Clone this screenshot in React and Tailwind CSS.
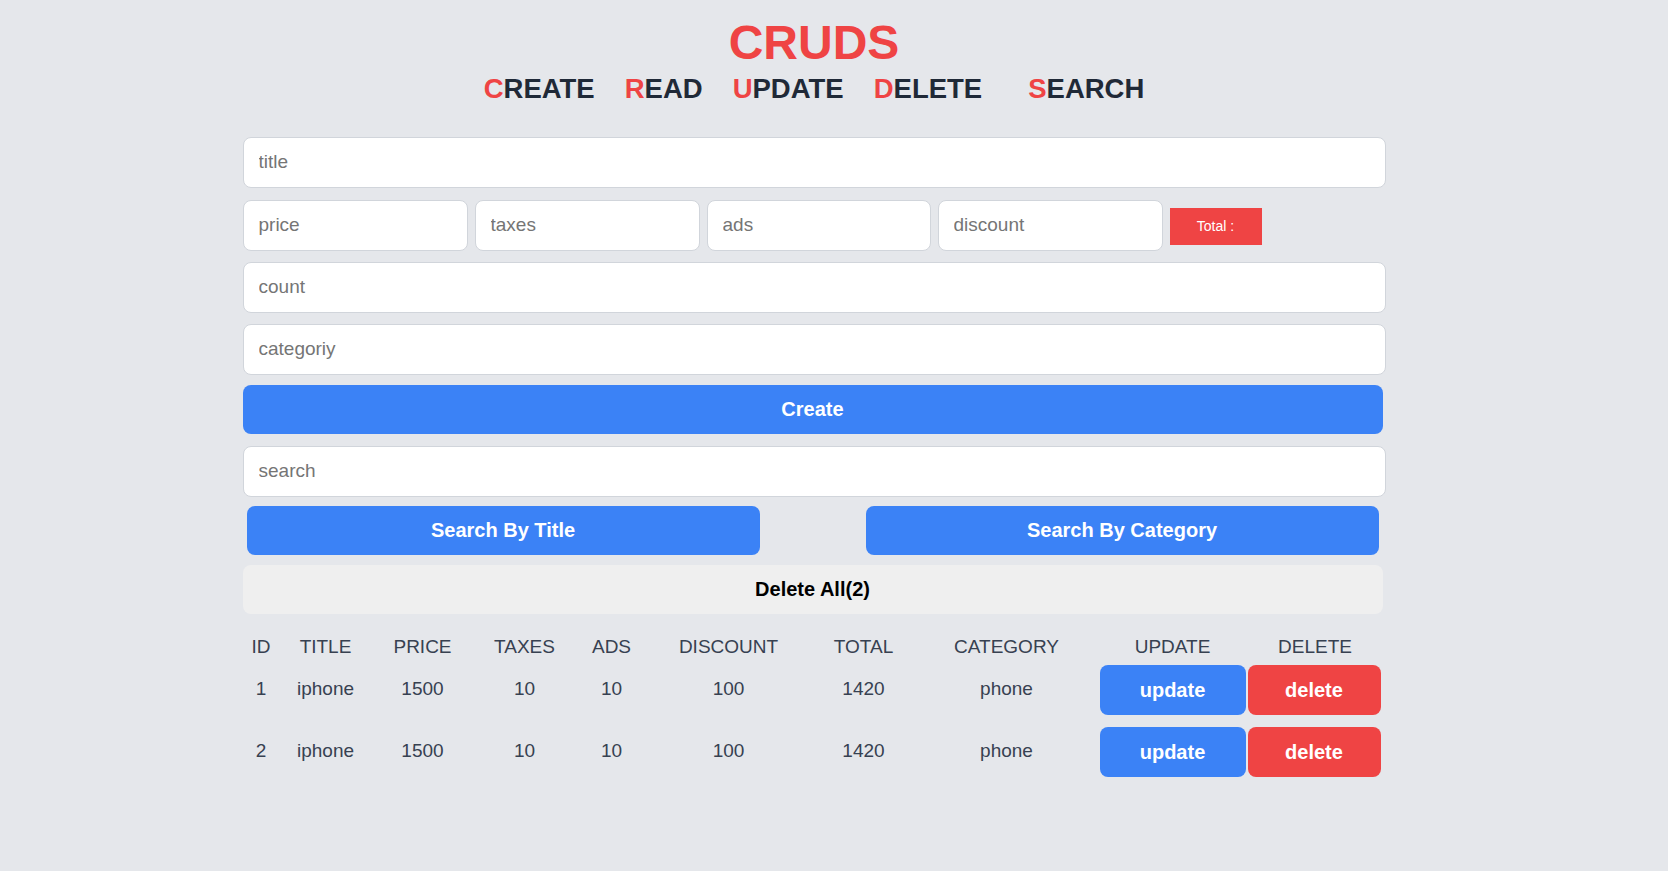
export default function App() {
  const rows = [
    { id: 1, title: "iphone", price: 1500, taxes: 10, ads: 10, discount: 100, total: 1420, category: "phone" },
    { id: 2, title: "iphone", price: 1500, taxes: 10, ads: 10, discount: 100, total: 1420, category: "phone" },
  ];
  const inputCls =
    "h-[51px] rounded-lg border border-[#d1d5db] bg-white px-[15px] text-[19px] text-[#1f2937] outline-none placeholder:text-[#757575]";
  const grid =
    "grid grid-cols-[37px_92px_102px_102px_72px_162px_108px_178px_152px_135px] text-center text-[19px] text-[#374151]";

  return (
    <div className="min-h-screen bg-[#e5e7eb] pr-[40px] pt-[19px] font-['Liberation_Sans',Arial,sans-serif]">
      <div className="mx-auto w-[1143px]">
        <h1 className="text-center text-[48px] font-bold leading-none text-[#ef4444]">CRUDS</h1>
        <div className="mt-[8px] flex justify-center gap-[30px] text-[27.5px] font-bold leading-none text-[#1f2937]">
          <span><span className="text-[#ef4444]">C</span>REATE</span>
          <span><span className="text-[#ef4444]">R</span>EAD</span>
          <span><span className="text-[#ef4444]">U</span>PDATE</span>
          <span><span className="text-[#ef4444]">D</span>ELETE</span>
          <span className="ml-[16px]"><span className="text-[#ef4444]">S</span>EARCH</span>
        </div>

        <div className="mt-[34px] flex flex-col">
          <input className={`${inputCls} w-full`} placeholder="title" />
          <div className="mt-[12px] flex items-center gap-[7px]">
            <input className={`${inputCls} w-[225px]`} placeholder="price" />
            <input className={`${inputCls} w-[225px]`} placeholder="taxes" />
            <input className={`${inputCls} w-[224px]`} placeholder="ads" />
            <input className={`${inputCls} w-[225px]`} placeholder="discount" />
            <div className="mt-[2px] flex h-[37px] w-[92px] items-center justify-center bg-[#ef4444] text-[14px] text-white">
              Total :
            </div>
          </div>
          <input className={`${inputCls} mt-[11px] w-full`} placeholder="count" />
          <input className={`${inputCls} mt-[11px] w-full`} placeholder="categoriy" />
          <button className="mt-[10px] h-[49px] w-[1140px] rounded-lg bg-[#3b82f6] text-[20px] font-bold text-white">
            Create
          </button>
          <input className={`${inputCls} mt-[12px] w-full`} placeholder="search" />
          <div className="mt-[9px] flex w-[1140px] justify-between px-[4px]">
            <button className="h-[49px] w-[513px] rounded-lg bg-[#3b82f6] text-[20px] font-bold text-white">
              Search By Title
            </button>
            <button className="h-[49px] w-[513px] rounded-lg bg-[#3b82f6] text-[20px] font-bold text-white">
              Search By Category
            </button>
          </div>
          <button className="mt-[10px] h-[49px] w-[1140px] rounded-lg bg-[#efefef] text-[20px] font-bold text-black">
            Delete All(2)
          </button>

          <div className="mt-[19px] w-[1140px]">
            <div className={`${grid} h-[26px] items-center`}>
              <div>ID</div>
              <div>TITLE</div>
              <div>PRICE</div>
              <div>TAXES</div>
              <div>ADS</div>
              <div>DISCOUNT</div>
              <div>TOTAL</div>
              <div>CATEGORY</div>
              <div className="pl-[2px]">UPDATE</div>
              <div>DELETE</div>
            </div>
            {rows.map((r) => (
              <div key={r.id} className={`${grid} h-[62px] items-center`}>
                <div>{r.id}</div>
                <div>{r.title}</div>
                <div>{r.price}</div>
                <div>{r.taxes}</div>
                <div>{r.ads}</div>
                <div>{r.discount}</div>
                <div>{r.total}</div>
                <div>{r.category}</div>
                <div className="flex pl-[4px] pr-[2px]">
                  <button className="h-[50px] w-full rounded-lg bg-[#3b82f6] text-[20px] font-bold text-white">
                    update
                  </button>
                </div>
                <div className="flex pr-[2px]">
                  <button className="h-[50px] w-full rounded-lg bg-[#ef4444] text-[20px] font-bold text-white">
                    delete
                  </button>
                </div>
              </div>
            ))}
          </div>
        </div>
      </div>
    </div>
  );
}
